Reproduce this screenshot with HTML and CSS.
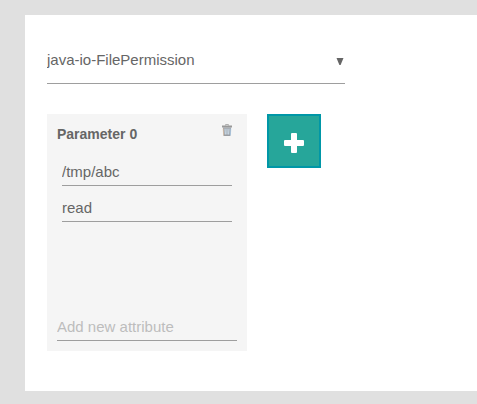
FILE: index.html
```html
<!DOCTYPE html>
<html lang="en">
<head>
<meta charset="utf-8">
<title>Permission parameters</title>
<link rel="stylesheet" href="styles.css">
</head>
<body>
<main class="panel">
  <div class="picker">
    <select class="picker-select" aria-label="Permission type">
      <option>java-io-FilePermission</option>
    </select>
    <svg class="picker-arrow" width="8" height="8" viewBox="0 0 8 8" aria-hidden="true"><path d="M.5 0h7L4.6 7H3.4z" fill="currentColor"/></svg>
  </div>
  <div class="parameters">
    <section class="card">
      <header class="card-header">
        <h2 class="card-title">Parameter 0</h2>
        <button class="delete" type="button" aria-label="Delete parameter">
          <svg width="10" height="12" viewBox="0 0 10 12" aria-hidden="true">
            <path d="M3.5 1.5V.5h3v1" fill="none" stroke="#b0b0b0"/>
            <path d="M0 1.5h10v2H0z" fill="#999"/>
            <path d="M1 3.5h8l-.6 8.5H1.6z" fill="#9a9da2"/>
            <path d="M1.2 4.5l.5 7" fill="none" stroke="#d9b99c" stroke-width=".7"/>
            <path d="M3 4.5l.3 6M5 4.5v6M7 4.5l-.3 6" fill="none" stroke="#d3e6f5"/>
            <path d="M8.8 4.5l-.5 7" fill="none" stroke="#a0c4e4" stroke-width=".7"/>
          </svg>
        </button>
      </header>
      <div class="attributes">
        <input class="field" type="text" value="/tmp/abc" aria-label="Attribute 1">
        <input class="field" type="text" value="read" aria-label="Attribute 2">
      </div>
      <input class="field field-new" type="text" placeholder="Add new attribute" aria-label="Add new attribute">
    </section>
    <button class="add" type="button" aria-label="Add parameter">
      <svg width="20" height="20" viewBox="0 0 20 20" aria-hidden="true"><path d="M8 0h4q1 0 1 1v6h6q1 0 1 1v4q0 1-1 1h-6v6q0 1-1 1H8q-1 0-1-1v-6H1q-1 0-1-1V8q0-1 1-1h6V1q0-1 1-1z" fill="#fff"/></svg>
    </button>
  </div>
</main>
</body>
</html>
```
FILE: styles.css
```css
* {
  box-sizing: border-box;
}

body {
  margin: 0;
  padding: 15px 0 13px 25px;
  background: #e0e0e0;
  color: #666;
  font: 15px/20px "Liberation Sans", Arial, sans-serif;
}

.panel {
  padding: 21px 22px 40px;
  background: #fff;
}

.picker {
  position: relative;
  max-width: 298px;
}

.picker-select {
  display: block;
  width: 100%;
  height: 48px;
  padding: 0 20px 0 0;
  border: 0;
  border-bottom: 1px solid #9e9e9e;
  border-radius: 0;
  background: transparent;
  color: inherit;
  font: inherit;
  appearance: none;
}

.picker-arrow {
  position: absolute;
  top: 22px;
  right: 1px;
  pointer-events: none;
}

.parameters {
  display: flex;
  flex-wrap: wrap;
  align-items: flex-start;
  gap: 20px;
  margin-top: 30px;
}

.card {
  display: flex;
  flex-direction: column;
  width: 200px;
  min-height: 237px;
  padding: 10px;
  background: #f5f5f5;
}

.card-header {
  display: flex;
  justify-content: space-between;
  align-items: flex-start;
  padding-right: 5px;
}

.card-title {
  margin: 0;
  font-size: 14px;
  line-height: 20px;
}

.delete {
  display: flex;
  padding: 0;
  border: 0;
  background: none;
}

.attributes {
  display: flex;
  flex-direction: column;
  gap: 10px;
  padding: 16px 5px;
}

.field {
  width: 100%;
  height: 26px;
  padding: 0 0 2px;
  border: 0;
  border-bottom: 1px solid #9e9e9e;
  border-radius: 0;
  background: transparent;
  color: inherit;
  font: inherit;
}

.field::placeholder {
  color: #bdbdbd;
}

.field-new {
  height: 28px;
  padding: 0;
  margin-top: auto;
}

.add {
  display: flex;
  justify-content: center;
  align-items: center;
  width: 54px;
  height: 54px;
  padding: 4px 0 0;
  border: 2px solid #0097a7;
  background: #26a69a;
}
```
